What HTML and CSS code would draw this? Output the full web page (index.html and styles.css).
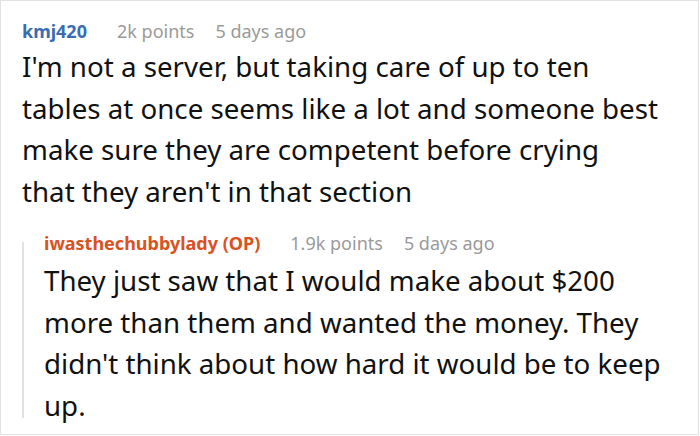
FILE: index.html
```html
<!DOCTYPE html>
<html>
<head>
<meta charset="utf-8">
<link rel="stylesheet" href="styles.css">
</head>
<body>
<div class="card">
  <div class="comment">
    <div class="meta">
      <span class="user">kmj420</span>
      <span class="points">2k points</span>
      <span class="time">5 days ago</span>
    </div>
    <p class="body">I'm not a server, but taking care of up to ten tables at once seems like a lot and someone best make sure they are competent before crying<br>that they aren't in that section</p>
  </div>
  <div class="reply">
    <div class="bar"></div>
    <div class="reply-content">
      <div class="meta">
        <span class="user op">iwasthechubbylady (OP)</span>
        <span class="points">1.9k points</span>
        <span class="time">5 days ago</span>
      </div>
      <p class="body">They just saw that I would make about $200 more than them and wanted the money. They didn't think about how hard it would be to keep up.</p>
    </div>
  </div>
</div>
</body>
</html>
```

FILE: styles.css
```css
html, body {
  margin: 0;
  padding: 0;
  background: #fff;
}
.card {
  box-sizing: border-box;
  width: 699px;
  height: 435px;
  border: 1px solid #e2e2e2;
  padding: 18px 20px 0 21px;
  font-family: "Noto Sans", "Open Sans", sans-serif;
  color: #111;
}
.meta {
  display: flex;
  align-items: baseline;
  font-size: 18px;
  line-height: 24px;
}
.user {
  font-weight: 700;
  color: #3a6cb4;
  margin-right: 30px;
}
.user.op {
  color: #d9521f;
}
.points, .time {
  color: #9a9a9a;
}
.points {
  margin-right: 21px;
}
.body {
  margin: 0;
  font-size: 27.7px;
  line-height: 41.5px;
}
.comment .body {
  margin-top: 3px;
  max-width: 640px;
}
.reply {
  display: flex;
  gap: 20px;
  margin-top: 19px;
}
.bar {
  flex: none;
  width: 2px;
  background: #e2e2e2;
  margin: 11px 0 8px;
}
.reply-content {
  flex: 1;
}
.reply .body {
  margin-top: 5px;
}
```
